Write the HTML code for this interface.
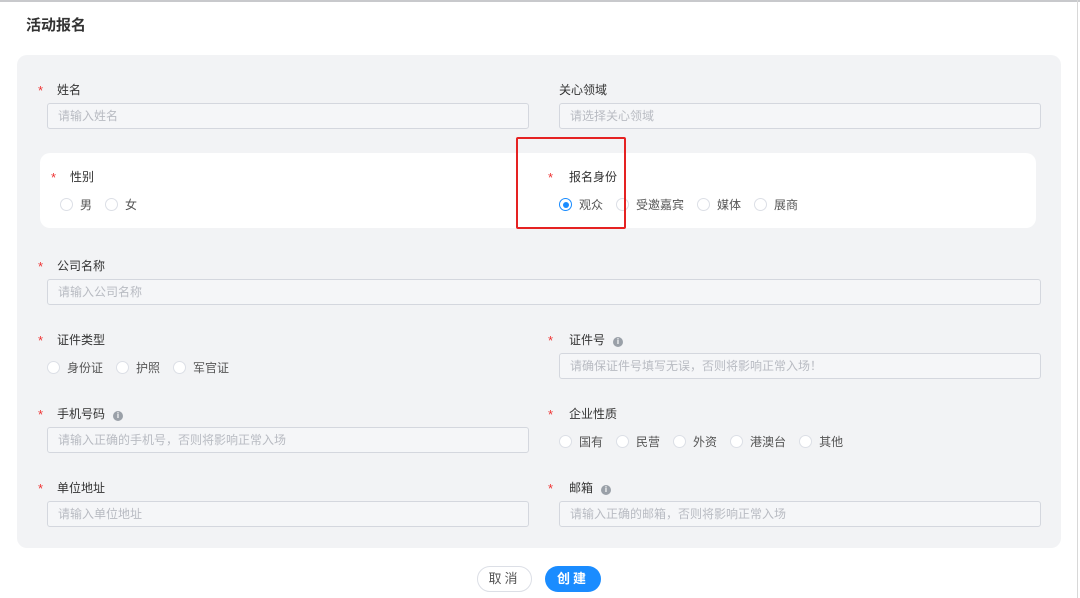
<!DOCTYPE html>
<html><head><meta charset="utf-8"><style>
*{margin:0;padding:0;box-sizing:border-box}
body{width:1080px;height:598px;background:#fff;position:relative;overflow:hidden;font-family:"Liberation Sans","Noto Sans CJK SC",sans-serif;font-size:12px;color:#333}
.a{position:absolute}
.top{left:0;top:0;width:1080px;height:2px;background:#c8c9cc}
.rb{right:2px;top:0;width:1px;height:598px;background:#d8d8d8}
.title{left:26px;top:14px;font-size:15px;font-weight:bold;color:#333}
.panel{left:17px;top:55px;width:1044px;height:493px;background:#f2f3f5;border-radius:10px}
.card{left:40px;top:153px;width:996px;height:75px;background:#fff;border-radius:10px}
.lab{font-size:12px;color:#333;line-height:14px}
.st{color:#e33;font-size:13px;line-height:14px}
.inp{height:26px;background:#f5f6f8;border:1px solid #d4d7de;border-radius:3px;color:#b8bbc2;font-size:12px;line-height:24px;padding-left:10px}
.rad{display:inline-flex;align-items:center;margin-right:13px;color:#555;font-size:12px}
.rad i{display:inline-block;width:13px;height:13px;border:1px solid #dcdfe6;border-radius:50%;background:#fff;margin-right:7px}
.rad i.on{border-color:#1a8cff;position:relative}
.rad i.on:after{content:"";position:absolute;left:2.5px;top:2.5px;width:6px;height:6px;border-radius:50%;background:#1a8cff}
.info{display:inline-block;width:10px;height:10px;border-radius:50%;background:#9aa0a8;color:#fff;font-size:8px;line-height:10px;text-align:center;font-weight:bold;margin-left:8px;vertical-align:0}
.btn{height:26px;border-radius:13px;font-size:13px;line-height:24px;text-align:center;letter-spacing:3px}
</style></head><body>
<div class="a top"></div><div class="a rb"></div>
<div class="a title">活动报名</div>
<div class="a panel"></div>
<div class="a card"></div>

<span class="a st" style="left:38px;top:84px">*</span><span class="a lab" style="left:57px;top:83px">姓名</span>
<div class="a inp" style="left:47px;top:103px;width:482px">请输入姓名</div>
<span class="a lab" style="left:559px;top:83px">关心领域</span>
<div class="a inp" style="left:559px;top:103px;width:482px">请选择关心领域</div>

<span class="a st" style="left:51px;top:171px">*</span><span class="a lab" style="left:70px;top:170px">性别</span>
<div class="a" style="left:60px;top:196px"><span class="rad"><i></i>男</span><span class="rad"><i></i>女</span></div>
<span class="a st" style="left:548px;top:171px">*</span><span class="a lab" style="left:569px;top:170px">报名身份</span>
<div class="a" style="left:559px;top:196px"><span class="rad"><i class="on"></i>观众</span><span class="rad"><i></i>受邀嘉宾</span><span class="rad"><i></i>媒体</span><span class="rad"><i></i>展商</span></div>
<div class="a" style="left:516px;top:137px;width:110px;height:92px;border:2px solid #e52222;border-radius:2px"></div>

<span class="a st" style="left:38px;top:260px">*</span><span class="a lab" style="left:57px;top:259px">公司名称</span>
<div class="a inp" style="left:47px;top:279px;width:994px">请输入公司名称</div>

<span class="a st" style="left:38px;top:334px">*</span><span class="a lab" style="left:57px;top:333px">证件类型</span>
<div class="a" style="left:47px;top:359px"><span class="rad"><i></i>身份证</span><span class="rad"><i></i>护照</span><span class="rad"><i></i>军官证</span></div>
<span class="a st" style="left:548px;top:334px">*</span><span class="a lab" style="left:569px;top:333px">证件号<span class="info">i</span></span>
<div class="a inp" style="left:559px;top:353px;width:482px">请确保证件号填写无误，否则将影响正常入场！</div>

<span class="a st" style="left:38px;top:408px">*</span><span class="a lab" style="left:57px;top:407px">手机号码<span class="info">i</span></span>
<div class="a inp" style="left:47px;top:427px;width:482px">请输入正确的手机号，否则将影响正常入场</div>
<span class="a st" style="left:548px;top:408px">*</span><span class="a lab" style="left:569px;top:407px">企业性质</span>
<div class="a" style="left:559px;top:433px"><span class="rad"><i></i>国有</span><span class="rad"><i></i>民营</span><span class="rad"><i></i>外资</span><span class="rad"><i></i>港澳台</span><span class="rad"><i></i>其他</span></div>

<span class="a st" style="left:38px;top:482px">*</span><span class="a lab" style="left:57px;top:481px">单位地址</span>
<div class="a inp" style="left:47px;top:501px;width:482px">请输入单位地址</div>
<span class="a st" style="left:548px;top:482px">*</span><span class="a lab" style="left:569px;top:481px">邮箱<span class="info">i</span></span>
<div class="a inp" style="left:559px;top:501px;width:482px">请输入正确的邮箱，否则将影响正常入场</div>

<div class="a btn" style="left:477px;top:566px;width:55px;border:1px solid #dcdfe6;color:#555;background:#fff">取消</div>
<div class="a btn" style="left:545px;top:566px;width:56px;background:#1a8cff;color:#fff;font-weight:bold;line-height:26px">创建</div>
</body></html>
